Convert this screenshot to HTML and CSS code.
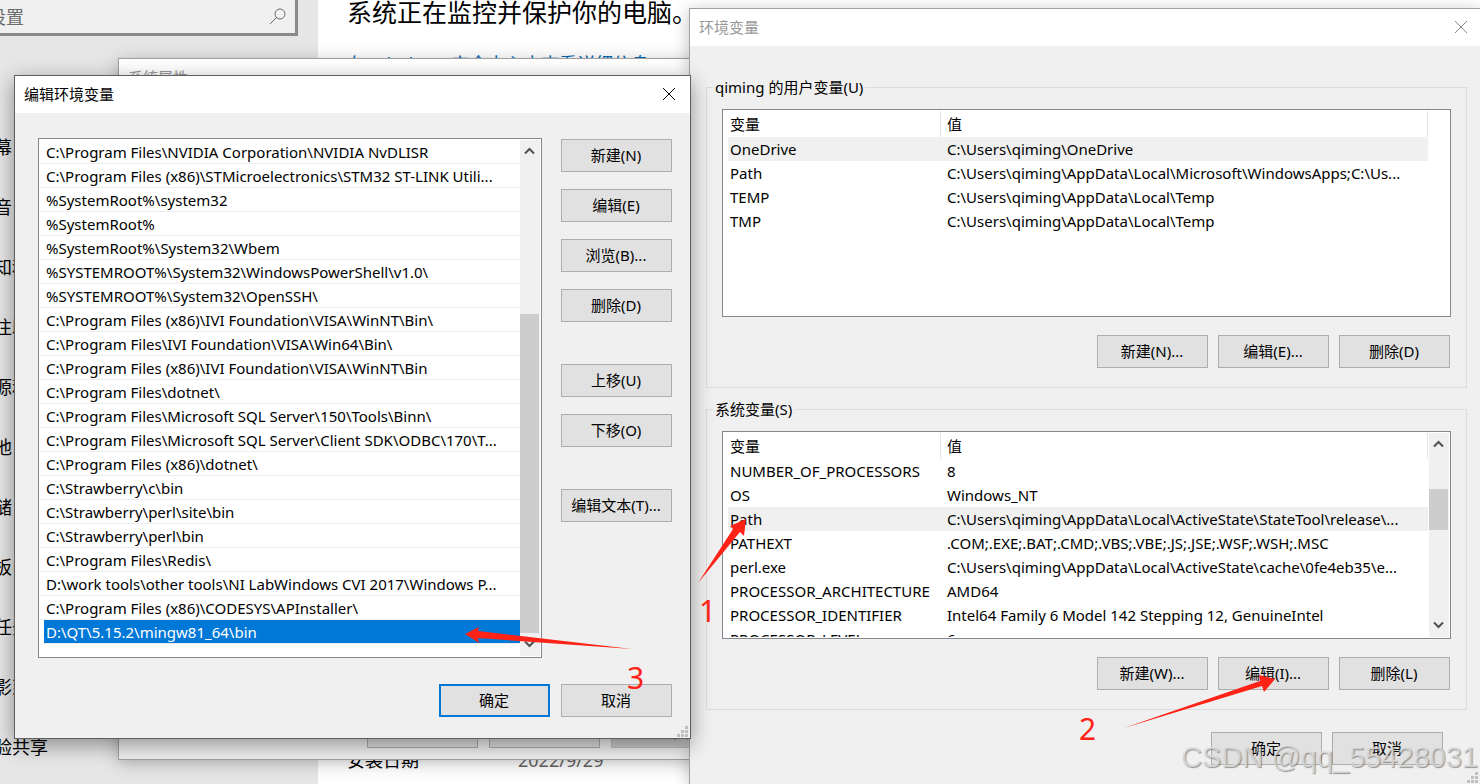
FILE: index.html
```html
<!DOCTYPE html>
<html lang="zh-CN">
<head>
  <meta charset="UTF-8">
  <meta name="viewport" content="width=device-width, initial-scale=1.0">
  <title>编辑环境变量</title>
  <link rel="stylesheet" href="styles.css">
</head>
<body>
<div class="desktop">

  <!-- Settings -->
  <div class="settings">
    <aside class="sidebar">
      <div class="search">
        <input type="text" placeholder="查找设置" aria-label="查找设置">
        <svg width="18" height="18" viewBox="0 0 18 18"><circle cx="11" cy="6" r="5" fill="none" stroke="#6b6b6b"/><path d="M7.4 9.6L1 16" stroke="#6b6b6b"/></svg>
      </div>
      <nav class="menu">
        <a href="#">屏幕</a>
        <a href="#">声音</a>
        <a href="#">通知和操作</a>
        <a href="#">专注助手</a>
        <a href="#">电源和睡眠</a>
        <a href="#">电池</a>
        <a href="#">存储</a>
        <a href="#">平板电脑</a>
        <a href="#">多任务处理</a>
        <a href="#">投影到此电脑</a>
        <a href="#">体验共享</a>
      </nav>
    </aside>
    <main class="about">
      <h1>系统正在监控并保护你的电脑。</h1>
      <a class="more" href="#">在 Windows 安全中心中查看详细信息</a>
      <dl class="specs">
        <dt>安装日期</dt><dd>2022/9/29</dd>
        <dt>操作系统版本</dt><dd></dd>
      </dl>
    </main>
  </div>

  <!-- System properties -->
  <div class="window sysprops inactive">
    <div class="titlebar"><span>系统属性</span></div>
    <div class="footer">
      <button class="btn">确定</button>
      <button class="btn">取消</button>
      <button class="btn" disabled>应用(A)</button>
    </div>
  </div>

  <!-- Environment variables -->
  <div class="window env inactive">
    <div class="titlebar">
      <span>环境变量</span>
      <button class="close" aria-label="关闭"><svg width="14" height="14" viewBox="0 0 14 14"><path d="M1 1L13 13M13 1L1 13"/></svg></button>
    </div>
    <div class="env-body">
      <fieldset class="group">
        <legend>qiming 的用户变量(U)</legend>
        <div class="listview">
          <div class="rows">
            <table>
              <thead><tr><th class="name">变量</th><th>值</th></tr></thead>
              <tbody>
                <tr class="current"><td>OneDrive</td><td>C:\Users\qiming\OneDrive</td></tr>
                <tr><td>Path</td><td>C:\Users\qiming\AppData\Local\Microsoft\WindowsApps;C:\Us...</td></tr>
                <tr><td>TEMP</td><td>C:\Users\qiming\AppData\Local\Temp</td></tr>
                <tr><td>TMP</td><td>C:\Users\qiming\AppData\Local\Temp</td></tr>
              </tbody>
            </table>
          </div>
          <div class="gutter"></div>
        </div>
        <div class="actions">
          <button class="btn">新建(N)...</button>
          <button class="btn">编辑(E)...</button>
          <button class="btn">删除(D)</button>
        </div>
      </fieldset>
      <fieldset class="group">
        <legend>系统变量(S)</legend>
        <div class="listview">
          <div class="rows">
            <table>
              <thead><tr><th class="name">变量</th><th>值</th></tr></thead>
              <tbody>
                <tr><td>NUMBER_OF_PROCESSORS</td><td>8</td></tr>
                <tr><td>OS</td><td>Windows_NT</td></tr>
                <tr class="current"><td>Path</td><td>C:\Users\qiming\AppData\Local\ActiveState\StateTool\release\...</td></tr>
                <tr><td>PATHEXT</td><td>.COM;.EXE;.BAT;.CMD;.VBS;.VBE;.JS;.JSE;.WSF;.WSH;.MSC</td></tr>
                <tr><td>perl.exe</td><td>C:\Users\qiming\AppData\Local\ActiveState\cache\0fe4eb35\e...</td></tr>
                <tr><td>PROCESSOR_ARCHITECTURE</td><td>AMD64</td></tr>
                <tr><td>PROCESSOR_IDENTIFIER</td><td>Intel64 Family 6 Model 142 Stepping 12, GenuineIntel</td></tr>
                <tr><td>PROCESSOR_LEVEL</td><td>6</td></tr>
              </tbody>
            </table>
          </div>
          <div class="scrollbar">
            <button aria-label="向上"><svg width="11" height="8" viewBox="0 0 11 8"><path d="M1 6.5L5.5 2L10 6.5"/></svg></button>
            <div class="track short"><div class="thumb"></div></div>
            <button aria-label="向下"><svg width="11" height="8" viewBox="0 0 11 8"><path d="M1 1.5L5.5 6L10 1.5"/></svg></button>
          </div>
        </div>
        <div class="actions">
          <button class="btn">新建(W)...</button>
          <button class="btn">编辑(I)...</button>
          <button class="btn">删除(L)</button>
        </div>
      </fieldset>
      <div class="footer">
        <button class="btn">确定</button>
        <button class="btn">取消</button>
      </div>
    </div>
    <svg class="grip" width="11" height="11" viewBox="0 0 11 11"><path d="M8 0h3v3h-3zM4 4h3v3h-3zM8 4h3v3h-3zM0 8h3v3h-3zM4 8h3v3h-3zM8 8h3v3h-3z"/></svg>
  </div>

  <!-- Edit environment variable -->
  <div class="window edit">
    <div class="titlebar">
      <span>编辑环境变量</span>
      <button class="close" aria-label="关闭"><svg width="14" height="14" viewBox="0 0 14 14"><path d="M1 1L13 13M13 1L1 13"/></svg></button>
    </div>
    <div class="edit-body">
      <div class="pathbox">
        <ul class="paths">
          <li>C:\Program Files\NVIDIA Corporation\NVIDIA NvDLISR</li>
          <li>C:\Program Files (x86)\STMicroelectronics\STM32 ST-LINK Utili...</li>
          <li>%SystemRoot%\system32</li>
          <li>%SystemRoot%</li>
          <li>%SystemRoot%\System32\Wbem</li>
          <li>%SYSTEMROOT%\System32\WindowsPowerShell\v1.0\</li>
          <li>%SYSTEMROOT%\System32\OpenSSH\</li>
          <li>C:\Program Files (x86)\IVI Foundation\VISA\WinNT\Bin\</li>
          <li>C:\Program Files\IVI Foundation\VISA\Win64\Bin\</li>
          <li>C:\Program Files (x86)\IVI Foundation\VISA\WinNT\Bin</li>
          <li>C:\Program Files\dotnet\</li>
          <li>C:\Program Files\Microsoft SQL Server\150\Tools\Binn\</li>
          <li>C:\Program Files\Microsoft SQL Server\Client SDK\ODBC\170\T...</li>
          <li>C:\Program Files (x86)\dotnet\</li>
          <li>C:\Strawberry\c\bin</li>
          <li>C:\Strawberry\perl\site\bin</li>
          <li>C:\Strawberry\perl\bin</li>
          <li>C:\Program Files\Redis\</li>
          <li>D:\work tools\other tools\NI LabWindows CVI 2017\Windows P...</li>
          <li>C:\Program Files (x86)\CODESYS\APInstaller\</li>
          <li class="selected">D:\QT\5.15.2\mingw81_64\bin</li>
        </ul>
        <div class="scrollbar">
          <button aria-label="向上"><svg width="11" height="8" viewBox="0 0 11 8"><path d="M1 6.5L5.5 2L10 6.5"/></svg></button>
          <div class="track long"><div class="thumb"></div></div>
          <button aria-label="向下"><svg width="11" height="8" viewBox="0 0 11 8"><path d="M1 1.5L5.5 6L10 1.5"/></svg></button>
        </div>
      </div>
      <div class="side">
        <button class="btn">新建(N)</button>
        <button class="btn">编辑(E)</button>
        <button class="btn">浏览(B)...</button>
        <button class="btn">删除(D)</button>
        <button class="btn spaced">上移(U)</button>
        <button class="btn">下移(O)</button>
        <button class="btn spaced">编辑文本(T)...</button>
      </div>
    </div>
    <div class="footer">
      <button class="btn primary">确定</button>
      <button class="btn">取消</button>
    </div>
    <svg class="grip" width="11" height="11" viewBox="0 0 11 11"><path d="M8 0h3v3h-3zM4 4h3v3h-3zM8 4h3v3h-3zM0 8h3v3h-3zM4 8h3v3h-3zM8 8h3v3h-3z"/></svg>
  </div>

  <!-- step marks -->
  <svg class="marks">
    <polygon points="698,583 733,529 730,526 746,519 744,536 740,532"/>
    <polygon points="1124,728 1260,681 1259,675 1275,679 1264,692 1262,686"/>
    <polygon points="632,649 478,631 479,627 465,634 479,643 478,638"/>
    <text x="699" y="622">1</text>
    <text x="1079" y="740">2</text>
    <text x="627" y="689">3</text>
  </svg>
  <div class="watermark">CSDN @qq_55428031</div>
</div>
</body>
</html>
```
FILE: styles.css
```css
* {
  box-sizing: border-box;
}
body {
  margin: 0;
  font-family: "Noto Sans", "Noto Sans CJK SC", sans-serif;
  font-size: 15px;
  line-height: 24px;
  color: #000;
}
button, input {
  font: inherit;
  color: inherit;
}
.desktop {
  position: relative;
  height: 100vh;
  overflow: hidden;
  background: #fff;
}

/* settings app */
.settings {
  display: flex;
  height: 100%;
  font-size: 18px;
}
.sidebar {
  width: 318px;
  background: #e6e6e6;
}
.search {
  display: flex;
  align-items: center;
  width: 298px;
  height: 36px;
  padding-right: 8px;
  background: #f0f0f0;
  border: solid #8a8a8a;
  border-width: 0 3px 3px 0;
  overflow: hidden;
}
.search input {
  flex: 1;
  min-width: 0;
  margin-left: -50px;
  border: 0;
  background: none;
}
.search input::placeholder {
  color: #6b6b6b;
}
.menu {
  display: flex;
  flex-direction: column;
  gap: 36px;
  margin: 99px 0 0 -24px;
}
.menu a {
  color: #000;
  text-decoration: none;
  white-space: nowrap;
}
.about {
  flex: 1;
  display: flex;
  flex-direction: column;
  padding-left: 29px;
}
.about h1 {
  margin: 0;
  font-size: 25px;
  font-weight: normal;
  line-height: 24px;
}
.about .more {
  margin-top: 28px;
  color: #0066b4;
  text-decoration: none;
}
.specs {
  display: grid;
  grid-template-columns: 171px 1fr;
  row-gap: 10px;
  margin: auto 0 -22px;
}
.specs dd {
  margin: 0;
  color: #666;
}

/* windows */
.window {
  position: absolute;
  background: #f0f0f0;
  border: 1px solid #5f5f5f;
  box-shadow: 0 6px 20px rgba(0, 0, 0, 0.4);
}
.window.inactive {
  border-color: #a0a0a0;
  box-shadow: 0 3px 16px rgba(0, 0, 0, 0.25);
}
.titlebar {
  display: flex;
  justify-content: space-between;
  align-items: center;
  height: 37px;
  padding: 0 14px 2px 9px;
  background: #fff;
}
.inactive .titlebar {
  color: #999;
}
.close {
  display: flex;
  padding: 0;
  border: 0;
  background: none;
}
.close path {
  fill: none;
  stroke: #000;
}
.inactive .close path {
  stroke: #888;
}
.grip {
  position: absolute;
  right: 2px;
  bottom: 1px;
  fill: #bfbfbf;
}
.btn {
  width: 111px;
  height: 33px;
  padding: 0 1px 2px 0;
  background: #e1e1e1;
  border: 1px solid #adadad;
}
.btn.primary {
  border: 2px solid #0078d7;
}
.btn:disabled {
  background: #ccc;
  border-color: #bfbfbf;
  color: #838383;
}
.footer {
  display: flex;
  justify-content: flex-end;
  gap: 10px;
}

.sysprops {
  left: 118px;
  top: 58px;
  width: 614px;
  height: 702px;
  display: flex;
  flex-direction: column;
  justify-content: space-between;
}
.sysprops .footer {
  gap: 11px;
  padding: 0 9px 11px;
}

.env {
  left: 689px;
  right: 0;
  top: 8px;
  bottom: 0;
  border-width: 1px 0 0 1px;
}
.env .titlebar {
  padding-right: 12px;
}
.env-body {
  padding: 29px 13px 0 16px;
}
.group {
  min-width: 0;
  margin: 0 0 9px;
  padding: 10px 15px 19px;
  border: 1px solid #dcdcdc;
}
.group legend {
  padding: 0 2px;
  margin-left: -9px;
}
.listview {
  display: flex;
  height: 208px;
  padding: 1px 1px 1px 5px;
  background: #fff;
  border: 1px solid #828790;
}
.rows {
  flex: 1;
  min-width: 0;
  overflow: hidden;
}
.rows table {
  width: 100%;
  table-layout: fixed;
  border-collapse: separate;
  border-spacing: 0;
}
.rows th,
.rows td {
  height: 24px;
  padding: 0 0 0 6px;
  text-align: left;
  font-weight: normal;
  white-space: nowrap;
}
.rows th {
  height: 26px;
  border-right: 1px solid #e5e5e5;
}
.rows .name {
  width: 213px;
}
.rows th:first-child,
.rows td:first-child {
  padding-left: 2px;
}
.rows .current td {
  background: #f0f0f0;
}
.gutter {
  width: 21px;
}
.actions {
  display: flex;
  justify-content: flex-end;
  gap: 10px;
  margin-top: 18px;
  padding-right: 1px;
}
.env .footer {
  padding: 13px 24px 0 0;
}

.scrollbar {
  display: flex;
  flex-direction: column;
  width: 20px;
  background: #f0f0f0;
}
.listview .scrollbar {
  margin-left: 1px;
}
.scrollbar button {
  display: flex;
  justify-content: center;
  align-items: center;
  height: 23px;
  padding: 0 2px 1px 0;
  border: 0;
  background: none;
}
.scrollbar path {
  fill: none;
  stroke: #505050;
  stroke-width: 2;
}
.track {
  flex: 1;
}
.thumb {
  width: 19px;
  background: #cdcdcd;
}
.short {
  padding-top: 33px;
}
.short .thumb {
  height: 41px;
}
.long {
  padding-top: 151px;
}
.long .thumb {
  height: 100%;
}

.edit {
  left: 14px;
  top: 75px;
  width: 677px;
}
.edit-body {
  display: flex;
  gap: 19px;
  padding: 25px 18px 0 23px;
}
.pathbox {
  flex: 1;
  min-width: 0;
  display: flex;
  padding: 1px;
  background: #fff;
  border: 1px solid #828790;
}
.paths {
  flex: 1;
  min-width: 0;
  margin: 0;
  padding: 0 0 12px;
  list-style: none;
}
.paths li {
  height: 24px;
  padding-left: 6px;
  border-bottom: 1px solid #ededed;
  white-space: nowrap;
  overflow: hidden;
}
.paths .selected {
  margin-left: 4px;
  padding-left: 2px;
  background: #0078d7;
  color: #fff;
}
.side {
  display: flex;
  flex-direction: column;
  gap: 17px;
  padding-top: 1px;
}
.side .spaced {
  margin-top: 25px;
}
.edit .footer {
  gap: 11px;
  padding: 26px 18px 21px;
}

/* marks over the windows */
.marks {
  position: absolute;
  left: 0;
  top: 0;
  width: 100%;
  height: 100%;
  fill: #ff2216;
  font-size: 30px;
  pointer-events: none;
}
.watermark {
  position: absolute;
  right: 2px;
  bottom: 9px;
  font-family: "Liberation Sans", Arial, sans-serif;
  font-size: 29px;
  line-height: 36px;
  color: rgba(225, 225, 225, 0.75);
  text-shadow: 1px 1px 1px rgba(90, 90, 90, 0.6);
  pointer-events: none;
}
```
